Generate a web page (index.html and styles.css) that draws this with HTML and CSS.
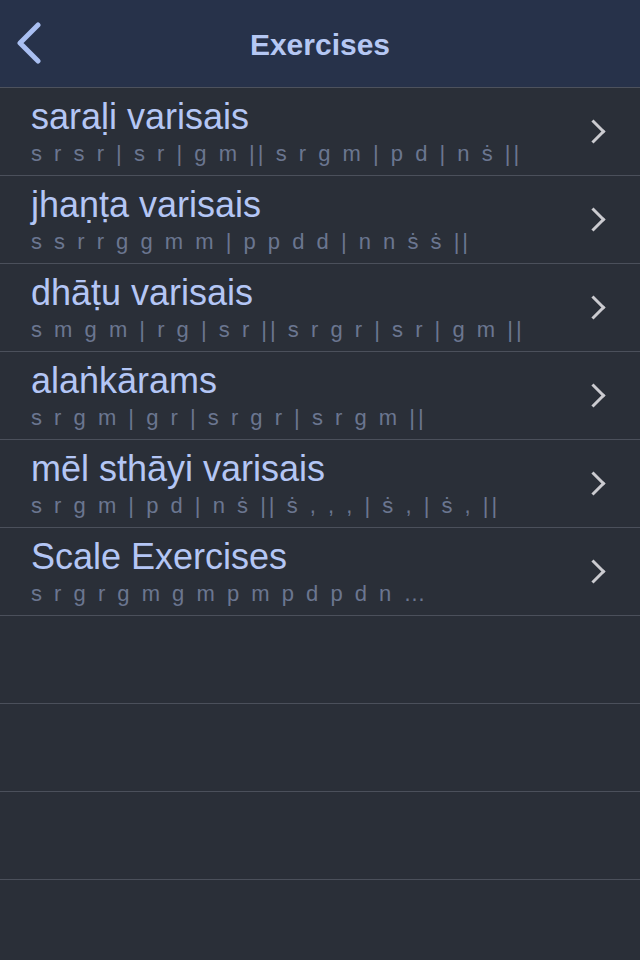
FILE: index.html
```html
<!DOCTYPE html>
<html lang="en">
<head>
    <meta charset="UTF-8">
    <meta name="viewport" content="width=device-width, initial-scale=1.0">
    <title>Exercises</title>
    <link rel="stylesheet" href="styles.css">
</head>
<body>
    <header class="navbar">
        <a class="back" href="#" aria-label="Back">
            <svg width="30" height="44" viewBox="0 0 30 44">
                <polyline points="22,3 4,21 22,39" fill="none" stroke="#a9bff2" stroke-width="5" stroke-linecap="round" stroke-linejoin="round"/>
            </svg>
        </a>
        <h1>Exercises</h1>
    </header>

    <ul class="list">
        <li class="row">
            <div class="text">
                <div class="title">saraḷi varisais</div>
                <div class="notes">s r s r | s r | g m || s r g m | p d | n ṡ ||</div>
            </div>
            <span class="chevron"></span>
        </li>
        <li class="row">
            <div class="text">
                <div class="title">jhaṇṭa varisais</div>
                <div class="notes">s s r r g g m m | p p d d | n n ṡ ṡ ||</div>
            </div>
            <span class="chevron"></span>
        </li>
        <li class="row">
            <div class="text">
                <div class="title">dhāṭu varisais</div>
                <div class="notes">s m g m | r g | s r || s r g r | s r | g m ||</div>
            </div>
            <span class="chevron"></span>
        </li>
        <li class="row">
            <div class="text">
                <div class="title">alaṅkārams</div>
                <div class="notes">s r g m | g r | s r g r | s r g m ||</div>
            </div>
            <span class="chevron"></span>
        </li>
        <li class="row">
            <div class="text">
                <div class="title">mēl sthāyi varisais</div>
                <div class="notes">s r g m | p d | n ṡ || ṡ , , , | ṡ , | ṡ , ||</div>
            </div>
            <span class="chevron"></span>
        </li>
        <li class="row">
            <div class="text">
                <div class="title">Scale Exercises</div>
                <div class="notes">s r g r g m g m p m p d p d n …</div>
            </div>
            <span class="chevron"></span>
        </li>
        <li class="row empty"></li>
        <li class="row empty"></li>
        <li class="row empty"></li>
    </ul>
</body>
</html>
```

FILE: styles.css
```css
/* General */
body {
    font-family: 'Liberation Sans', Arial, sans-serif;
    background-color: #2a2f38;
    color: #b3c5f5;
    margin: 0;
    padding: 0;
    width: 640px;
    min-height: 960px;
}

/* Barra superior */
.navbar {
    height: 88px;
    background-color: #27324a;
    border-bottom: 1px solid #4d525d;
    box-sizing: border-box;
    display: flex;
    align-items: center;
    justify-content: center;
    position: relative;
    padding-top: 3px;
}

.navbar h1 {
    margin: 0;
    font-size: 30px;
    font-weight: bold;
    color: #b5c7f3;
}

.back {
    position: absolute;
    left: 16px;
    top: 22px;
    display: block;
    line-height: 0;
}

/* Lista */
.list {
    list-style: none;
    margin: 0;
    padding: 0;
}

.row {
    height: 88px;
    box-sizing: border-box;
    border-bottom: 1px solid #4b505b;
    display: flex;
    align-items: center;
    padding: 0 32px 0 31px;
}

.text {
    flex: 1;
    align-self: flex-start;
    padding-top: 9px;
}

.title {
    font-size: 36px;
    line-height: 40px;
    color: #b4c6f5;
}

.notes {
    font-size: 22px;
    line-height: 30px;
    margin-top: 2px;
    color: #6b7690;
    letter-spacing: 3px;
    white-space: nowrap;
}

.chevron {
    width: 14px;
    height: 14px;
    border-top: 3px solid #cbcbd0;
    border-right: 3px solid #cbcbd0;
    transform: rotate(45deg);
    margin-right: 6px;
}
```
